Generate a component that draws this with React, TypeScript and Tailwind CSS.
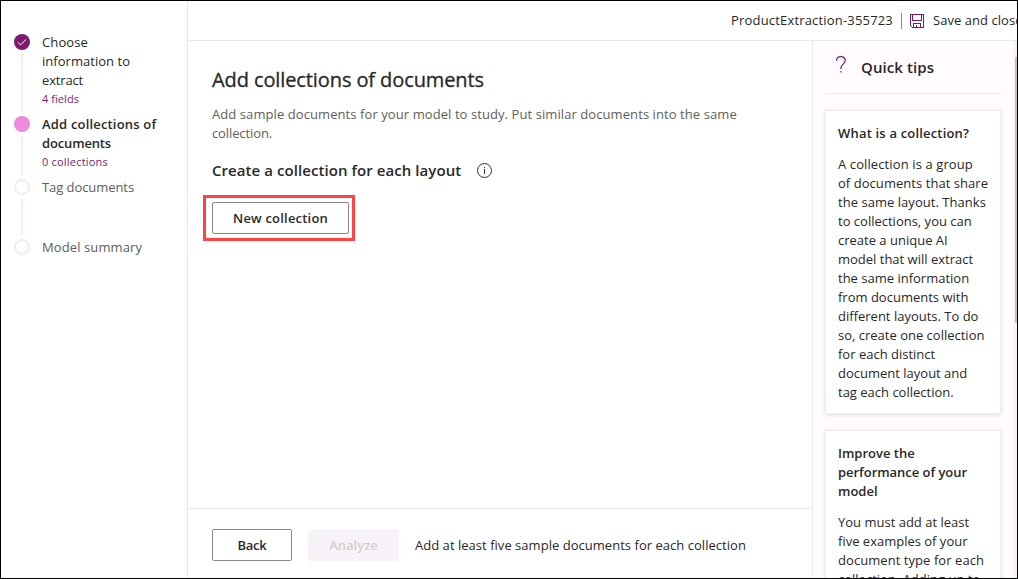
import type { ReactNode } from "react";

function Line({ children, className = "" }: { children: ReactNode; className?: string }) {
  return <span className={`block whitespace-nowrap ${className}`}>{children}</span>;
}

function SaveIcon() {
  return (
    <svg width="14" height="14" viewBox="0 0 14 14" fill="none" stroke="#7d1b70" shapeRendering="crispEdges">
      <path d="M0.5 0.5H13.5V13.5H2.5L0.5 11.5Z" />
      <path d="M2.5 0.5V6.5H11.5V0.5" />
      <path d="M3.5 13.5V9.5H10.5V13.5" />
      <path d="M6.5 11V13.5" />
    </svg>
  );
}

function InfoIcon() {
  return (
    <svg width="15" height="15" viewBox="0 0 15 15" fill="none" stroke="#323130">
      <circle cx="7.5" cy="7.5" r="7" />
      <path d="M7.5 6V11M7.5 4V5" />
    </svg>
  );
}

function QuestionIcon() {
  return (
    <svg width="10" height="17" viewBox="0 0 10 17" fill="none" stroke="#7d1b70" strokeWidth="1.2">
      <path d="M0.6 4.8C0.6 2.3 2.4 0.6 4.9 0.6C7.4 0.6 9.2 2.2 9.2 4.5C9.2 8 4.9 8.2 4.9 12V13" />
      <path d="M4.9 15V16.4" />
    </svg>
  );
}

function DoneDot() {
  return (
    <svg className="block" width="16" height="16" viewBox="0 0 16 16">
      <circle cx="8" cy="8" r="8" fill="#7d1b70" />
      <path d="M4 8.3L6.6 10.9L12 5.5" fill="none" stroke="#fff" />
    </svg>
  );
}

function Step({ dot, bar, height, children }: { dot: ReactNode; bar?: string; height: string; children: ReactNode }) {
  return (
    <li className={`flex gap-3 ${height}`}>
      <div className="flex w-4 shrink-0 flex-col items-center gap-1">
        {dot}
        {bar && <div className={`w-0.5 bg-[#f1edf0] ${bar}`} />}
      </div>
      <div className="-mt-px text-[13px] leading-[19px]">{children}</div>
    </li>
  );
}

const openDot = <div className="size-4 shrink-0 rounded-full border-2 border-[#f1edf0]" />;

function TipCard({ title, children, className }: { title: ReactNode; children: ReactNode; className: string }) {
  return (
    <section className={`shrink-0 border border-[#f0ecf1] bg-white px-3 pt-[13px] shadow-[0_1px_4px_rgba(0,0,0,0.13)] ${className}`}>
      <h3 className="font-semibold">{title}</h3>
      <div className="mt-3">{children}</div>
    </section>
  );
}

export default function App() {
  return (
    <div className="flex h-[579px] w-[1018px] overflow-hidden border border-black bg-white font-['Open_Sans','Noto_Sans',sans-serif] text-[13px] leading-[19px] text-[#292827]">
      <nav className="w-[187px] shrink-0 border-r border-[#eae8ea] pt-[33px] pl-[13px]">
        <ol>
          <Step dot={<DoneDot />} bar="h-[58px]" height="h-[82px]">
            <Line className="tracking-[0.12px]">Choose</Line>
            <Line className="tracking-[0.03px]">information to</Line>
            <Line className="tracking-[-0.16px]">extract</Line>
            <Line className="text-[11px] leading-[18px] tracking-[0.06px] text-[#7d1b70]">4 fields</Line>
          </Step>
          <Step dot={<div className="size-4 shrink-0 rounded-full bg-[#ee8bdc]" />} bar="h-[39px]" height="h-[63px]">
            <Line className="font-semibold tracking-[0.18px]">Add collections of</Line>
            <Line className="font-semibold tracking-[-0.15px]">documents</Line>
            <Line className="text-[11px] leading-[18px] tracking-[0.2px] text-[#7d1b70]">0 collections</Line>
          </Step>
          <Step dot={openDot} bar="h-9" height="h-[60px]">
            <Line className="tracking-[-0.07px] text-[#605e5c]">Tag documents</Line>
          </Step>
          <Step dot={openDot} height="h-5">
            <Line className="tracking-[0.1px] text-[#605e5c]">Model summary</Line>
          </Step>
        </ol>
      </nav>

      <div className="flex min-w-0 flex-1 flex-col">
        <header className="flex h-10 shrink-0 items-center overflow-hidden border-b border-[#eae8ea] pl-[543px]">
          <Line className="w-[163px] shrink-0 tracking-[0.18px]">ProductExtraction-355723</Line>
          <div className="ml-[7px] h-4 w-px shrink-0 bg-[#8a8886]" />
          <div className="ml-2 shrink-0">
            <SaveIcon />
          </div>
          <Line className="ml-[9px] tracking-[0.05px]">Save and close</Line>
        </header>

        <div className="flex min-h-0 flex-1">
          <main className="flex w-[624px] shrink-0 flex-col">
            <div className="flex-1 pt-[25px] pl-6">
              <h1 className="text-[20px] leading-7 font-medium tracking-[-0.1px] whitespace-nowrap [-webkit-text-stroke:0.3px_#292827]">
                Add collections of documents
              </h1>
              <p className="mt-[11px] text-[#605e5c]">
                <Line className="tracking-[0.08px]">
                  Add sample documents for your model to study. Put similar documents into the same
                </Line>
                <Line className="tracking-[-0.11px]">collection.</Line>
              </p>
              <div className="mt-[18px] flex items-center">
                <h2 className="w-[265px] text-[15px] leading-[19px] font-semibold tracking-[0.07px] whitespace-nowrap">
                  Create a collection for each layout
                </h2>
                <InfoIcon />
              </div>
              <div className="mt-[15px] -ml-[9px] h-[46px] w-[152px] border-3 border-[#ff4343] px-1.5 py-1">
                <button className="block h-8 w-[137px] rounded-xs border border-[#8a8886] pt-px font-semibold tracking-[0.2px]">
                  New collection
                </button>
              </div>
            </div>
            <footer className="flex h-[70px] shrink-0 border-t border-[#eae8ea] pt-5 pl-6">
              <button className="h-8 w-20 rounded-xs border border-[#8a8886] font-semibold tracking-[-0.2px]">Back</button>
              <button className="ml-4 h-8 w-[91px] rounded-xs bg-[#f8f3f8] font-semibold text-[#d2d0ce]" disabled>
                Analyze
              </button>
              <Line className="ml-4 leading-8 tracking-[0.03px]">Add at least five sample documents for each collection</Line>
            </footer>
          </main>

          <aside className="flex min-w-0 flex-1 border-l border-[#eae8ea] bg-[#fffbff]">
            <div className="flex w-[192px] shrink-0 flex-col overflow-hidden pl-3">
              <div className="flex h-[53px] w-[176px] shrink-0 border-b border-[#eae8ea] pt-[15px] pl-[11px]">
                <QuestionIcon />
                <h2 className="-mt-px ml-[15px] text-[15px] leading-6 font-semibold tracking-[0.08px] whitespace-nowrap">Quick tips</h2>
              </div>
              <TipCard className="mt-4 h-[304px] w-[176px]" title={<Line className="tracking-[0.18px]">What is a collection?</Line>}>
                <Line className="tracking-[0.11px]">A collection is a group</Line>
                <Line className="tracking-[0.05px]">of documents that share</Line>
                <Line className="tracking-[0.04px]">the same layout. Thanks</Line>
                <Line>to collections, you can</Line>
                <Line>create a unique AI</Line>
                <Line>model that will extract</Line>
                <Line>the same information</Line>
                <Line>from documents with</Line>
                <Line>different layouts. To do</Line>
                <Line>so, create one collection</Line>
                <Line>for each distinct</Line>
                <Line>document layout and</Line>
                <Line>tag each collection.</Line>
              </TipCard>
              <TipCard
                className="mt-4 h-[304px] w-[176px]"
                title={
                  <>
                    <Line>Improve the</Line>
                    <Line className="tracking-[-0.04px]">performance of your</Line>
                    <Line>model</Line>
                  </>
                }
              >
                <Line>You must add at least</Line>
                <Line>five examples of your</Line>
                <Line className="tracking-[0.06px]">document type for each</Line>
                <Line>collection. Adding up to</Line>
              </TipCard>
            </div>
            <div className="ml-auto flex w-1 justify-end bg-[#f8f3f8] pt-4">
              <div className="h-[266px] w-0.5 bg-[#c2bec2]" />
            </div>
          </aside>
        </div>
      </div>
    </div>
  );
}
